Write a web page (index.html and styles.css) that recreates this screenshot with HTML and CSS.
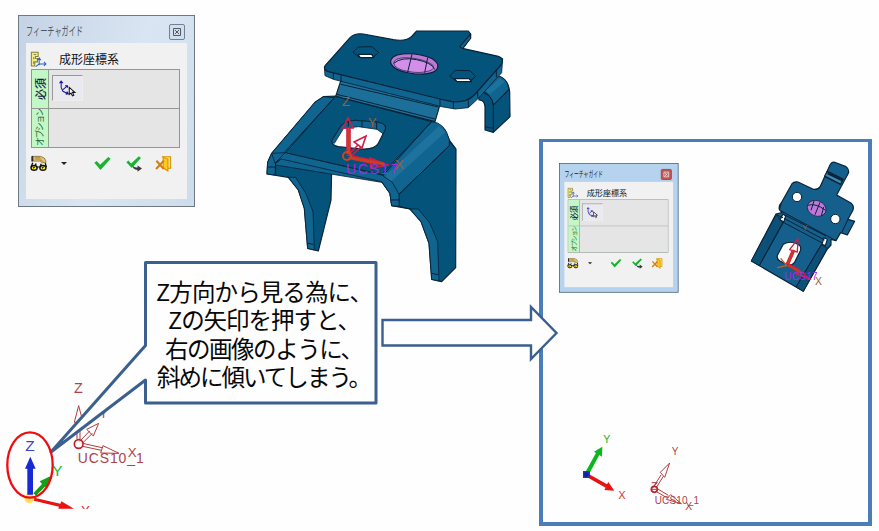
FILE: index.html
```html
<!DOCTYPE html>
<html lang="ja">
<head>
<meta charset="utf-8">
<title>成形座標系</title>
<link rel="stylesheet" href="styles.css">
</head>
<body>
<svg class="defs" width="0" height="0" aria-hidden="true">
  <symbol id="i-title" viewBox="0 0 50 50">
    <path d="M4 4H24V16H16V22H22V32H14V44H4Z" fill="#f3ec8a" stroke="#85803a" stroke-width="3"/>
    <path d="M11 10h7M11 18v6M11 30v8" stroke="#85803a" stroke-width="3" fill="none"/>
    <path d="M27 42V22M22 27l5-7 5 7M27 38H46M41 32l6 6-6 6M27 38l-10 8" fill="none" stroke="#2d62b8" stroke-width="3"/>
  </symbol>
  <symbol id="i-pick" viewBox="0 0 54 54">
    <path d="M9 7V24L14 35L28 42M4 12l5-6 5 6M14 30L26 20M20 19h7v6M22 43l7-1-4-6" fill="none" stroke="#18189c" stroke-width="3"/>
    <path d="M32 24V44L37 40L41 48L45 46L41 38H48Z" fill="#fff" stroke="#111" stroke-width="3"/>
  </symbol>
  <symbol id="i-find" viewBox="0 0 50 50">
    <path d="M4 4L9 2V19H4Z" fill="#222"/><path d="M9 4H31L42 9L47 18V22L36 23L30 18H10Z" fill="#e9c878" stroke="#66521f" stroke-width="2"/>
    <path d="M14 8h16M14 12h20M30 16l10 3" stroke="#8d6b28" stroke-width="2"/>
    <path d="M8 23L3 36M18 25l-4 9M33 26l-3 8M45 24l3 12" stroke="#111" stroke-width="4"/>
    <ellipse cx="12" cy="38" rx="9" ry="7" fill="#f7ed24" stroke="#111" stroke-width="4"/><ellipse cx="38" cy="38" rx="9" ry="7" fill="#f7ed24" stroke="#111" stroke-width="4"/>
    <path d="M20 35h10M9 39l5-4M35 39l5-4" stroke="#111" stroke-width="3"/>
  </symbol>
  <symbol id="i-ok" viewBox="0 0 50 50"><path d="M1 23L8 18L18 29L42 6L49 11L19 44Z" fill="#18b431"/></symbol>
  <symbol id="i-next" viewBox="0 0 50 50">
    <path d="M1 21L7 16L15 25L38 4L44 9L17 38Z" fill="#18b431"/>
    <path d="M20 29Q21 38 34 37V31L47 40L34 49V44Q18 44 20 29Z" fill="#383c3c"/>
  </symbol>
  <symbol id="i-exit" viewBox="0 0 50 50">
    <path d="M20 5H46V39H38" fill="#ffe36b" stroke="#d59200" stroke-width="3"/>
    <path d="M24 7L38 12V47L24 38Z" fill="#ffc923" stroke="#d59200" stroke-width="3"/>
    <path d="M4 17L26 41M26 17L3 41" stroke="#d77d0c" stroke-width="6"/>
  </symbol>
</svg>

<main class="canvas">
  <div class="panel"></div>

  <svg class="scene" viewBox="0 0 879 531">
    <!-- perspective bracket -->
    <g transform="translate(255 25) scale(.33333)" class="part">
      <path d="M205 215L180 232L50 385L38 412L36 447L100 457L130 495L148 550L158 670L190 678L228 525L230 437L380 470L405 505L410 542L465 552L498 590L522 655L530 763L560 770L602 728L603 372L583 345L570 315L530 290L245 213Z"/>
      <path class="lit" d="M205 215L180 232L50 385L38 412L36 447L60 450L62 415L95 380L238 218Z"/>
      <path class="lit" d="M530 290Q570 292 583 345L583 362L432 508V545L410 542L405 505L380 470V448Z"/>
      <path class="glow" d="M552 303L390 454L407 470L572 320Z"/>
      <path class="lit" d="M50 385L62 420L380 472L385 450L90 383Z"/>
      <path class="lit" d="M60 415L78 402L380 470L405 505L410 542L432 544V508L412 472L380 450L90 383Z"/>
      <path class="lit" d="M100 457L130 495L148 550L158 670L178 675L174 560L152 504L122 457ZM465 552L498 590L522 655L530 763L552 768L548 650L525 595L490 552Z"/>
      <path class="line" d="M238 218L90 380M530 290L385 450M583 350L603 372M432 508L583 362M62 450V415L78 402M410 525h22M38 426h24M158 655l17 3M530 745l19 4M432 544L465 552"/>
      <path d="M262 153L242 214L540 290L558 228Z" class="neck"/>
      <path class="line" d="M258 178L550 246M246 208L540 282"/>
      <path d="M670 200L720 150Q760 158 764 200L765 275L715 322L690 315V245Q688 224 672 225Z"/>
      <path class="lit" d="M680 196L720 150Q758 156 761 192L716 240Q708 207 680 196Z"/>
      <path class="glow" d="M735 160L692 198L704 208L750 170Z"/>
      <path class="line" d="M670 200Q714 205 715 245V322M715 240L762 195M690 305l25 5"/>
      <path class="lit" d="M208 125L210 152L235 163L560 245L600 252L640 248L672 218L740 143L743 100L650 180Z"/>
      <path class="lit" d="M640 20L647 27V40L624 71L605 65Z"/>
      <path d="M285 38Q300 23 325 27L415 44Q455 50 470 34L485 18H640L647 27L614 65L622 70L730 94Q750 101 738 120L658 210Q635 234 590 230L555 222L220 140Q202 134 211 121Z"/>
      <path class="line" d="M647 27V40L624 69M235 144V163M258 151v19M555 222v22M595 231v20M640 226v20M668 200v18M724 136v20"/>
      <path class="hole" d="M309 88H350L356 98H316ZM598 161H642L650 170H606Z"/>
      <path class="line" d="M294 82L310 66L350 65L371 82L355 96M294 82L313 97M584 153L601 136L644 137L662 154L646 168M584 153L606 170"/>
      <path d="M407 114Q405 91 443 87Q490 83 532 101Q558 118 544 136Q518 154 462 144Q415 136 407 114Z" class="rim"/>
      <path d="M416 115Q417 99 452 98Q505 100 533 120Q540 132 525 137Q495 147 458 139Q420 133 416 115Z" class="dome"/>
      <path class="line" d="M471 88L458 141M518 98L509 143M416 115Q440 95 485 104T540 134"/>
      <path class="hole" d="M231 346L257 304Q268 288 300 286L370 292Q397 297 390 315L370 355Q360 374 320 372L250 365Q229 360 231 346Z"/>
      <path class="lit" d="M257 304Q268 288 300 286L370 292Q397 297 390 315L384 326L366 313L310 305L266 310L238 355Q226 352 235 340Z"/>
      <path class="line" d="M280 290v15M321 288v18M365 292v21"/>
    </g>
    <g class="ucs-hot">
      <path d="M347 154V128M350 154V128M343 128L348 118L353 128ZM347 156L358 145M349 158L361 147M354 142L366 136L362 148ZM348 155L376 161M348 158L375 164M370 158L388 165L371 168Z" fill="none"/>
      <path class="hot-core" d="M348.500 154V129M351 158L384 164"/>
      <circle cx="347" cy="156" r="4"/>
    </g>
    <g class="cad-label brown"><text x="342" y="106" font-size="13" textLength="10">Z</text><text x="368" y="127" font-size="13" textLength="9">Y</text><text x="395" y="169" font-size="13">X</text></g>
    <text class="cad-label violet" x="346" y="174" font-size="14" textLength="52">UCS17</text>

    <!-- view along the Z arrow -->
    <g transform="translate(740 150) scale(.33333)" class="part flat">
      <path d="M282 36L318 50Q329 57 325 70L290 135L334 160Q344 168 338 182L324 208L344 214L322 255L302 248L288 272L273 268V285L262 297L190 424L34 333L108 192L126 188L118 178Q115 168 124 158L156 101Q162 94 174 96L220 118Q234 120 241 109L270 45Q274 36 282 36Z"/>
      <path class="lit" d="M109 193L34 333L58 347L129 220ZM262 294L190 424L168 411L244 284Z"/>
      <path class="bend" d="M262 64L309 87L302 103L254 78Z"/>
      <path d="M129 192L137 198L132 215L120 210ZM252 263L262 268L256 287L246 283Z" class="hole"/>
      <path class="line" d="M58 347L130 215M168 411L244 284M137 196L258 258M132 205L254 270M128 216L247 279M260 65L310 88M254 80L302 104M124 160L118 180L288 272M324 208L305 248M109 194L129 203"/>
      <path class="crease" d="M263 70L308 92"/>
      <circle class="hole edge" cx="171" cy="141" r="14"/><circle class="hole edge" cx="286" cy="207" r="14"/>
      <ellipse cx="230" cy="175" rx="29" ry="23" class="dome" transform="rotate(23 230 175)"/>
      <path class="line" d="M222 153L213 181M240 157L225 194M251 171L244 198M203 166Q226 158 257 181"/>
      <path class="hole" d="M130 283Q152 270 176 284Q185 289 181 302L163 338Q156 348 142 344L120 333Q108 326 113 314Z"/>
      <g class="red-arrows"><path d="M139 342L157 300M146 343L163 304M149 299L174 266L172 306ZM137 344L177 366M140 338L180 360M168 354L210 387L170 373Z"/><path class="thick" d="M142 342L162 300M142 344L184 368"/></g>
      <path d="M122 325L140 347L112 353" class="origin"/>
      <g class="cad-label"><text class="violet" x="133" y="391" font-size="30" textLength="100">UCS17</text><text class="brown" x="225" y="404" font-size="31">X</text><text class="brown" x="187" y="240" font-size="24">Y</text></g>
    </g>

    <!-- lower-left triads -->
    <g transform="translate(0 370) scale(.33333)">
      <g class="ucs-thin"><path d="M231 207V155M240 207V155M223 157L236 107L249 157ZM239 214L269 183M247 220L277 190M260 178L296 160L280 198ZM248 220L306 233M248 229L304 241M309 227L357 250L302 249Z"/><circle cx="236" cy="222" r="13"/></g>
      <g class="cad-label maroon"><text x="222" y="70" font-size="43" textLength="29">Z</text><text x="298" y="143" font-size="38">Y</text><text x="383" y="262" font-size="40">X</text><text x="233" y="278" font-size="42" textLength="198">UCS10_1</text></g>
      <circle cx="88" cy="385" r="15" fill="#ffe15c"/>
      <path d="M100 370L126 342L119 334L154 317L143 353L135 350L108 377Z" fill="#12a019"/>
      <path d="M82 374V296H75L91 260L107 296H99V374Z" fill="#1629d4"/>
      <path d="M103 383L181 401L184 394L222 416H175L177 410L102 392Z" fill="#e91212"/>
      <text class="cad-label green" x="157" y="318" font-size="46">Y</text>
      <text class="cad-label blue" x="76" y="244" font-size="46">Z</text>
      <svg x="235" y="405" width="50" height="12" viewBox="235 405 50 12"><text class="cad-label red" x="242" y="438" font-size="42">X</text></svg>
    </g>

    <!-- right-view triads -->
    <g transform="translate(565 420) scale(.33333)">
      <path d="M60 158L93 99L87 95L112 80L111 110L103 105L72 163Z" fill="#0eb61e"/>
      <path d="M70 161L126 193L130 186L148 212L118 210L122 203L64 170Z" fill="#e91212"/>
      <path d="M54 153H75V174H54Z" fill="#1e36c8"/><circle cx="64" cy="164" r="7" fill="#13209d"/>
      <text class="cad-label green" x="115" y="68" font-size="32">Y</text><text class="cad-label red" x="160" y="237" font-size="33">X</text>
      <g class="ucs-thin"><path d="M267 198L288 165M275 201L295 169M286 157L314 129L299 172ZM277 206L310 226M273 214L305 233M317 224L349 251L304 238ZM260 188H277L262 204"/><circle cx="268" cy="208" r="9"/><path d="M261 208h14"/></g>
      <g class="cad-label maroon"><text x="320" y="104" font-size="30">Y</text><text x="361" y="269" font-size="31">X</text><text x="269" y="251" font-size="30" textLength="133">UCS10_1</text></g>
    </g>

    <!-- callout and connector -->
    <path class="callout" d="M145.500 262.500H376V403H145.500V380L51 452L145.500 345.500Z"/>
    <ellipse cx="30" cy="465" rx="22.700" ry="32.700" fill="none" stroke="#f00b10" stroke-width="2.300"/>
    <path class="connector" d="M382.500 320H531V307L556.500 333L531 359V345.500H382.500Z"/>
    <g class="note">
      <text x="156" y="301" textLength="217">Z方向から見る為に、</text>
      <text x="168" y="329" textLength="193">Zの矢印を押すと、</text>
      <text x="165" y="358" textLength="199">右の画像のように、</text>
      <text x="157" y="386" textLength="215">斜めに傾いてしまう。</text>
    </g>
  </svg>

  <section class="dialog dialog-main">
    <header><svg class="caption" viewBox="0 0 60 16"><text x="0" y="12" textLength="57" lengthAdjust="spacingAndGlyphs">フィーチャガイド</text></svg><button class="close"><svg viewBox="0 0 14 14"><path d="M3.500 3.500h7v7h-7zM5 5l4 4M9 5l-4 4"/></svg></button></header>
    <div class="body">
      <div class="name"><svg><use href="#i-title"/></svg><h1>成形座標系</h1></div>
      <div class="slots">
        <div class="tab required"><span>必須</span></div><div class="slot"><button class="pick"><svg><use href="#i-pick"/></svg></button></div>
        <div class="tab"><span>オプション</span></div><div class="slot"></div>
      </div>
      <div class="tools"><svg><use href="#i-find"/></svg><i></i><svg class="ok"><use href="#i-ok"/></svg><svg class="next"><use href="#i-next"/></svg><svg class="exit"><use href="#i-exit"/></svg></div>
    </div>
  </section>

  <section class="dialog dialog-small">
    <header><svg class="caption" viewBox="0 0 60 16"><text x="0" y="12" textLength="57" lengthAdjust="spacingAndGlyphs">フィーチャガイド</text></svg><button class="close"><svg viewBox="0 0 14 14"><path d="M3.500 3.500h7v7h-7zM5 5l4 4M9 5l-4 4"/></svg></button></header>
    <div class="body">
      <div class="name"><svg><use href="#i-title"/></svg><h1>成形座標系</h1></div>
      <div class="slots">
        <div class="tab required"><span>必須</span></div><div class="slot"><button class="pick"><svg><use href="#i-pick"/></svg></button></div>
        <div class="tab"><span>オプション</span></div><div class="slot"></div>
      </div>
      <div class="tools"><svg><use href="#i-find"/></svg><i></i><svg class="ok"><use href="#i-ok"/></svg><svg class="next"><use href="#i-next"/></svg><svg class="exit"><use href="#i-exit"/></svg></div>
    </div>
  </section>
</main>
</body>
</html>
```
FILE: styles.css
```css
* { box-sizing: border-box; }
body { margin: 0; background: #fefefe; font-family: "Liberation Sans", "Noto Sans CJK JP", sans-serif; }
.defs { position: absolute; }
.canvas { position: relative; width: 879px; height: 531px; overflow: hidden; }
.scene { position: absolute; inset: 0; width: 879px; height: 531px; }
.panel { position: absolute; left: 539px; top: 139px; width: 333px; height: 387px; border: 4px solid #4b7db8; border-width: 3px 4px 4px; }

.part path { fill: #04537b; stroke: #092237; stroke-width: 3.5; stroke-linejoin: round; }
.part.flat path { fill: #145f8b; }
.part path.neck { fill: #1b6f99; }
.part path.rim { fill: #bd78d6; }
.part .dome { fill: #d38eea; stroke-width: 2; }
.part.flat .dome { fill: #bf78da; }
.part path.lit { fill: #0f6590; stroke-width: 2.5; }
.part.flat path.lit { fill: #0c4f77; }
.part.flat path.bend { fill: #3b88b2; }
.part.flat path.crease { fill: none; stroke-width: 6; }
.part path.glow { fill: #2b7eaa; opacity: .55; stroke: none; }
.part path.line { fill: none; stroke-width: 3; }
.part path.hole, .part .hole { fill: #fefefe; }
.part .edge, .part ellipse { stroke: #092237; stroke-width: 3; }
.part .red-arrows path { fill: none; stroke: #d21c49; stroke-width: 4; }
.part .red-arrows path.thick { stroke: #c93820; stroke-width: 7; }
.part path.origin { fill: none; stroke: #be652d; stroke-width: 4; }
.ucs-hot { fill: none; stroke: #d31c45; stroke-width: 1.6; }
.ucs-hot .hot-core { stroke: #c93d22; stroke-width: 3; }
.ucs-hot circle { stroke: #cf431d; stroke-width: 2; }
.ucs-thin { fill: none; stroke: #b13a3e; stroke-width: 3; }
.ucs-thin circle { stroke: #bd2028; stroke-width: 5; }
.cad-label { font-family: "Liberation Sans", sans-serif; }
.brown { fill: #97603d; }
.violet { fill: #a22be0; }
.maroon { fill: #ac4449; }
.green { fill: #22b32b; }
.blue { fill: #3541d3; }
.red { fill: #d83238; }
.callout { fill: #fefefe; stroke: #3b5f8e; stroke-width: 3; stroke-linejoin: round; }
.connector { fill: #fefefe; stroke: #3b5f8e; stroke-width: 2.4; }
.note { font: 23.5px "Noto Sans CJK JP", sans-serif; fill: #080808; }

.dialog { position: absolute; width: 177px; height: 192px; padding: 0 7px 7px; display: flex; flex-direction: column; border: 1.5px solid #707983; background: linear-gradient(110deg, #c4d3e5, #d9e5f2 55%, #cddcec); }
.dialog-main { left: 18px; top: 15px; }
.dialog-small { left: 559px; top: 163px; transform: scale(.675); transform-origin: 0 0; border-color: #435564; background: #b5d3ef; }
.dialog header { height: 27px; display: flex; align-items: center; justify-content: space-between; padding-top: 5px; }
.caption { width: 60px; height: 16px; overflow: visible; font: 12px "Noto Sans CJK JP", sans-serif; fill: #4c5866; }
.dialog-small .caption { fill: #101d2b; }
.close { width: 16px; height: 16px; padding: 0; margin-right: 2px; display: grid; border: 1px solid #718096; border-radius: 2px; background: #d2dfed; }
.close svg { width: 14px; height: 14px; fill: none; stroke: #505963; }
.dialog-small .close { background: #c55351; border-color: #7c3542; }
.dialog-small .close svg { stroke: #fff; }
.body { flex: 1; background: #f1f1f1; padding: 6px 7px 0 5px; }
.name { height: 20px; display: flex; gap: 12px; align-items: center; margin-left: -1px; }
.name svg { width: 17px; height: 17px; }
.name h1 { margin: 0; font: 12px/18px "Noto Sans CJK JP", sans-serif; color: #101010; }
.slots { display: grid; grid-template: 39px 38px / 17px 1fr; border: 1px solid #8e9991; height: 79px; }
.tab { display: grid; place-items: center; background: #c3f7c5; border-right: 1px solid #8ba58c; color: #236536; overflow: hidden; }
.tab span { writing-mode: vertical-rl; transform: rotate(180deg); text-orientation: sideways; font: 9px/12px "Noto Sans CJK JP", sans-serif; white-space: nowrap; letter-spacing: -1.6px; }
.tab.required span { color: #10253f; font-size: 11px; font-weight: 500; letter-spacing: 0; }
.slot { background: #e5e5e5; padding: 5px 3px; }
.tab.required, .tab.required + .slot { border-bottom: 1px solid #969696; }
.pick { width: 31px; height: 26px; border: 1px solid #aaa; border-color: #999 #eee #eee #999; padding: 0; background: #e9e9ef; display: grid; place-items: center; }
.pick svg { width: 19px; height: 19px; }
.tools { display: flex; align-items: center; height: 31px; margin-left: -1px; }
.tools svg { width: 17px; height: 17px; }
.tools i { border: 3px solid transparent; border-top-color: #222; border-bottom: 0; margin-left: 14px; }
.tools .ok { margin-left: 27px; }
.tools .next { margin-left: 15px; }
.tools .exit { margin-left: 12px; }
```
